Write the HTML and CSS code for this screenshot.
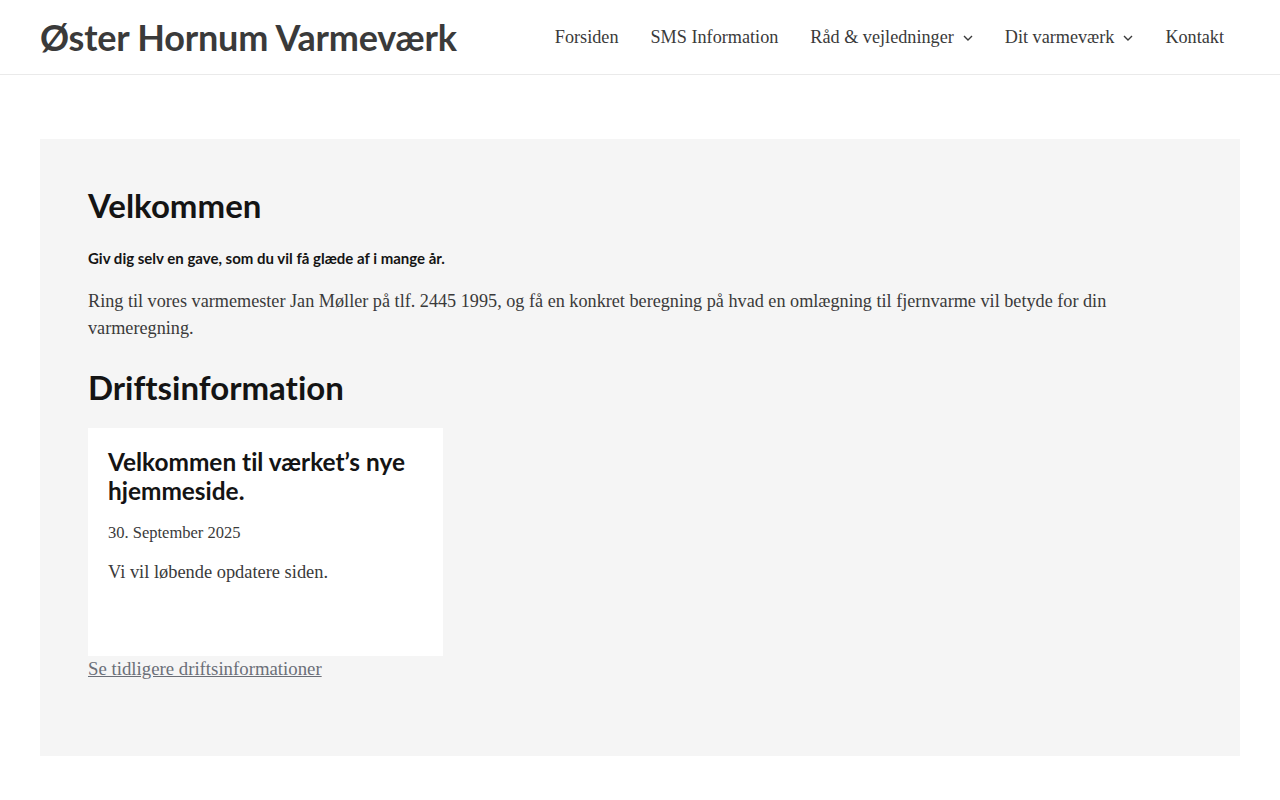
FILE: index.html
```html
<!DOCTYPE html>
<html lang="da">
<head>
<meta charset="utf-8">
<title>Øster Hornum Varmeværk</title>
<link rel="stylesheet" href="styles.css">
</head>
<body>
<header class="site-header">
  <div class="brand">Øster Hornum Varmeværk</div>
  <nav class="main-nav">
    <a class="nav-item" href="#">Forsiden</a>
    <a class="nav-item" href="#">SMS Information</a>
    <a class="nav-item" href="#">Råd &amp; vejledninger <svg class="caret" width="10" height="6" viewBox="0 0 10 6"><path d="M1 1l4 4 4-4" fill="none" stroke="currentColor" stroke-width="1.4"/></svg></a>
    <a class="nav-item" href="#">Dit varmeværk <svg class="caret" width="10" height="6" viewBox="0 0 10 6"><path d="M1 1l4 4 4-4" fill="none" stroke="currentColor" stroke-width="1.4"/></svg></a>
    <a class="nav-item" href="#">Kontakt</a>
  </nav>
</header>
<main class="page">
  <section class="content-box">
    <h2 class="heading">Velkommen</h2>
    <p class="lead">Giv dig selv en gave, som du vil få glæde af i mange år.</p>
    <p class="text">Ring til vores varmemester Jan Møller på tlf. 2445 1995, og få en konkret beregning på hvad en omlægning til fjernvarme vil betyde for din varmeregning.</p>
    <h2 class="heading heading-second">Driftsinformation</h2>
    <article class="card">
      <h3 class="card-title">Velkommen til værket’s nye hjemmeside.</h3>
      <div class="card-date">30. September 2025</div>
      <p class="card-text">Vi vil løbende opdatere siden.</p>
    </article>
    <a class="more-link" href="#">Se tidligere driftsinformationer</a>
  </section>
</main>
</body>
</html>
```
FILE: styles.css
```css
* { box-sizing: border-box; }
html, body { margin: 0; padding: 0; background: #fff; }
body {
  font-family: "Liberation Serif", serif;
  color: #3a3a3a;
}
.site-header {
  height: 75px;
  border-bottom: 1px solid #eaeaea;
  display: flex;
  align-items: center;
  justify-content: space-between;
  padding: 0 40px;
}
.brand {
  font-family: Lato, sans-serif;
  font-variant-ligatures: none;
  font-weight: 700;
  font-size: 36px;
  color: #3a3a3a;
  letter-spacing: -0.2px;
  margin-top: -1px;
}
.main-nav {
  display: flex;
  align-items: center;
  height: 100%;
}
.nav-item {
  display: flex;
  align-items: center;
  gap: 9px;
  padding: 0 16px;
  font-size: 18.2px;
  color: #3a3a3a;
  text-decoration: none;
  margin-top: 1px;
}
.caret { margin-top: 1px; }
.page { padding: 64px 40px 44px; }
.content-box {
  background: #f5f5f5;
  padding: 47px 48px 76px;
}
.heading {
  font-family: Lato, sans-serif;
  font-variant-ligatures: none;
  font-weight: 700;
  font-size: 33px;
  line-height: 1.2;
  color: #141414;
  margin: 0 0 23px;
}
.heading-second { margin-top: 26px; margin-bottom: 21px; }
.lead {
  font-family: Lato, sans-serif;
  font-weight: 700;
  font-size: 15px;
  color: #141414;
  margin: 0 0 21px;
}
.text {
  font-size: 18.2px;
  line-height: 27px;
  margin: 0;
}
.card {
  background: #fff;
  width: 355px;
  height: 228px;
  padding: 19px 20px;
}
.card-title {
  font-family: Lato, sans-serif;
  font-variant-ligatures: none;
  font-weight: 700;
  font-size: 24.4px;
  line-height: 29px;
  color: #141414;
  margin: 0 0 18px;
}
.card-date { font-size: 16.5px; margin-bottom: 19px; }
.card-text { font-size: 18.4px; margin: 0; }
.more-link {
  display: inline-block;
  margin-top: 2px;
  font-size: 18.8px;
  color: #6b6f78;
}
```
